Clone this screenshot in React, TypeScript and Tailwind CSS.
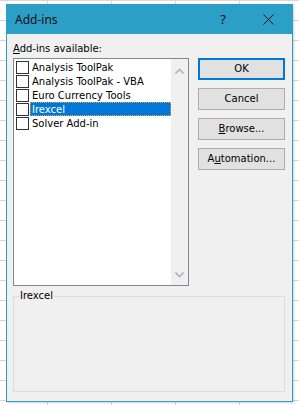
import React from "react";

const ITEMS = [
  "Analysis ToolPak",
  "Analysis ToolPak - VBA",
  "Euro Currency Tools",
  "Irexcel",
  "Solver Add-in",
];

const SELECTED = 3;

function Chevron({ up }: { up?: boolean }) {
  return (
    <svg width="9" height="6" viewBox="0 0 9 6" className="block">
      <path
        d={up ? "M0.5 5.5 L4.5 1.5 L8.5 5.5" : "M0.5 0.5 L4.5 4.5 L8.5 0.5"}
        fill="none"
        stroke="#b4b4b4"
        strokeWidth="1.6"
      />
    </svg>
  );
}

function DialogButton({
  children,
  primary,
}: {
  children: React.ReactNode;
  primary?: boolean;
}) {
  return (
    <button
      className={`h-[22px] w-[87px] bg-[#e1e1e1] text-[10px] leading-none text-black flex items-center justify-center ${
        primary ? "border-2 border-[#0078d7]" : "border border-[#adadad]"
      }`}
    >
      {children}
    </button>
  );
}

export default function App() {
  return (
    <div className="w-[299px] h-[405px] overflow-hidden bg-white bg-[linear-gradient(to_right,#d6d6d6_1px,transparent_1px),linear-gradient(to_bottom,#d6d6d6_1px,transparent_1px)] bg-[size:64px_20px] bg-[position:47px_0px] pt-[4px] pl-[6px] font-['DejaVu_Sans',sans-serif]">
      <div className="w-[287px] h-[398px] border border-[#2b9fc5] bg-[#f0f0f0] flex flex-col shadow-[1px_1px_2px_rgba(0,0,0,0.18)]">
        {/* title bar */}
        <div className="h-[29px] bg-[#2b9fc5] flex items-center pl-[8px] shrink-0">
          <span className="font-['Noto_Sans',sans-serif] text-[12px] text-[#111]">
            Add-ins
          </span>
          <span className="ml-auto font-['Noto_Sans',sans-serif] text-[13px] text-[#111] mr-[37px]">
            ?
          </span>
          <svg width="11" height="11" viewBox="0 0 11 11" className="mr-[18px]">
            <path d="M0.5 0.5 L10.5 10.5 M10.5 0.5 L0.5 10.5" stroke="#111" strokeWidth="1" />
          </svg>
        </div>

        {/* body */}
        <div className="flex-1 flex flex-col px-[6px] pb-[9px]">
          <div className="flex gap-[9px] pr-[1px]">
            <div className="w-[176px] flex flex-col pt-[9px]">
              <div className="text-[10px] leading-[12px] text-black">
                <span className="underline">A</span>dd-ins available:
              </div>
              <div className="mt-[3px] h-[228px] border border-[#828790] bg-white flex">
                <div className="flex-1 pt-[1px] pl-[2px]">
                  {ITEMS.map((item, i) => (
                    <div key={item} className="h-[14px] flex items-center">
                      <div className="w-[13px] h-[13px] border border-[#333] bg-white shrink-0" />
                      <div
                        className={`ml-[1px] h-[14px] flex-1 flex items-center pl-[2px] text-[10px] ${
                          i === SELECTED
                            ? "bg-[#0078d7] text-white outline outline-1 outline-dotted outline-[#f0a040] -outline-offset-1"
                            : "text-black"
                        }`}
                      >
                        {item}
                      </div>
                    </div>
                  ))}
                </div>
                <div className="w-[17px] bg-[#f0f0f0] flex flex-col items-center justify-between pt-[9px] pb-[7px]">
                  <Chevron up />
                  <Chevron />
                </div>
              </div>
            </div>
            <div className="flex flex-col gap-[8px] pt-[24px]">
              <DialogButton primary>OK</DialogButton>
              <DialogButton>Cancel</DialogButton>
              <DialogButton>
                <span>
                  <span className="underline">B</span>rowse...
                </span>
              </DialogButton>
              <DialogButton>
                <span>
                  A<span className="underline">u</span>tomation...
                </span>
              </DialogButton>
            </div>
          </div>

          <div className="relative mt-[10px] flex-1 border border-[#dcdcdc] mr-[1px]">
            <span className="absolute -top-[7px] left-[5px] bg-[#f0f0f0] px-[1px] text-[10px] leading-[12px] text-black">
              Irexcel
            </span>
          </div>
        </div>
      </div>
    </div>
  );
}
